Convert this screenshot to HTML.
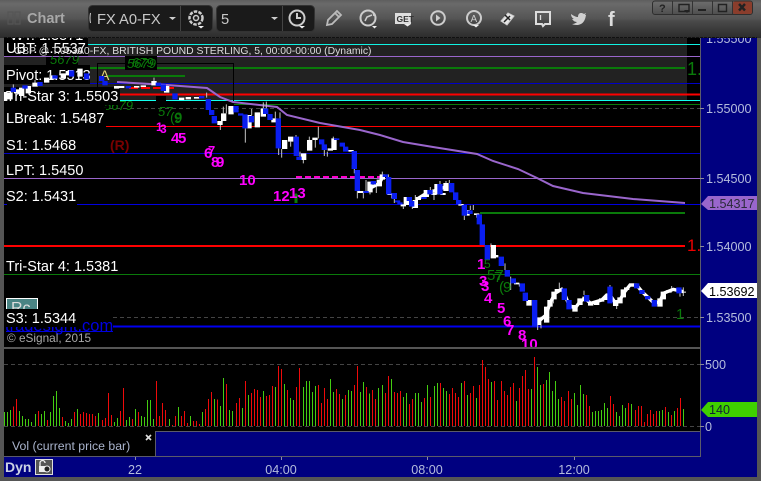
<!DOCTYPE html>
<html><head><meta charset="utf-8"><style>
html,body{margin:0;padding:0;background:#555;width:761px;height:481px;overflow:hidden}
svg{display:block;font-family:"Liberation Sans",sans-serif}
.l{font-size:14.5px;fill:#fff}
.ax{font-size:12.6px;fill:#b4bcdc}
.m{font-weight:bold;fill:#f0f}
.g{fill:#0a7a0a}
.w{stroke:#c4c4c4;stroke-width:3;fill:none}
.wb{stroke:#fff;stroke-width:16;fill:none}
.bb{stroke:#0a1ef0;stroke-width:16;fill:none}
.wl{stroke:#fff;stroke-width:10;fill:none}
.ic{fill:none;stroke:#ccc;stroke-width:2}
</style></head><body>
<svg width="761" height="481" viewBox="0 0 761 481" xmlns="http://www.w3.org/2000/svg">
<defs>
<linearGradient id="tb" x1="0" y1="0" x2="0" y2="1"><stop offset="0" stop-color="#5e5e5e"/><stop offset=".1" stop-color="#6a6a6a"/><stop offset=".5" stop-color="#545454"/><stop offset=".55" stop-color="#4a4a4a"/><stop offset="1" stop-color="#2b2b2b"/></linearGradient>
<linearGradient id="btn" x1="0" y1="0" x2="0" y2="1"><stop offset="0" stop-color="#6e6e6e"/><stop offset="1" stop-color="#4e4e4e"/></linearGradient>
<clipPath id="pane"><rect x="4" y="38" width="696" height="309"/></clipPath>
<clipPath id="axc"><rect x="701" y="38" width="56" height="400"/></clipPath>
<clipPath id="rc"><rect x="4" y="296" width="120" height="13"/></clipPath>
<clipPath id="nb"><rect x="4" y="309" width="200" height="40"/></clipPath>
</defs>
<rect width="761" height="481" fill="#555"/>
<rect width="761" height="38" fill="url(#tb)"/>
<path d="M4 37.500H757" stroke="#111" stroke-dasharray="3 1"/>
<rect x="701" y="38" width="56" height="439" fill="#000080"/>
<rect x="4" y="38" width="696" height="309" fill="#000"/>
<rect x="4" y="347" width="696" height="2" fill="#555"/>
<rect x="4" y="349" width="696" height="82" fill="#000"/>
<rect x="4" y="431" width="151" height="25" fill="#000"/>
<rect x="155" y="432" width="545" height="24" fill="#000080"/>
<rect x="4" y="457" width="753" height="20" fill="#000080"/>
<path d="M155.500 456V431.500H700M4 456.500H701M700.500 38V457" stroke="#5a5a6a" fill="none"/>

<g clip-path="url(#pane)">
<rect x="4" y="38" width="683" height="62" fill="#222"/>
<g shape-rendering="crispEdges" fill="none">
<path d="M4 44.500H700" stroke="#1fe" stroke-opacity=".95"/>
<path d="M4 56.500H700" stroke="#9a66cc"/>
<path d="M90 68H685" stroke="#0a7a0a" stroke-width="2"/>
<path d="M108 76H185" stroke="#0a7a0a" stroke-width="2"/>
<path d="M4 83.500H700" stroke="#0000c8"/>
<path d="M120 94.500H700" stroke="#f00" stroke-width="1.600"/>
<path d="M4 100.500H700" stroke="#1fe"/>
<path d="M4 104.500H700" stroke="#0a7a0a"/>
<path d="M4 108.500H700" stroke="#444" stroke-dasharray="4 3"/>
<path d="M106 126.500H700" stroke="#f00" stroke-width="1.400"/>
<path d="M4 153.500H700" stroke="#0000c8"/>
<path d="M4 178.500H700" stroke="#9a66cc"/>
<path d="M77 204.500H700" stroke="#0000e0" stroke-width="1.400"/>
<path d="M480 213H685" stroke="#0a7a0a" stroke-width="2"/>
<path d="M4 246H685" stroke="#f00" stroke-width="2"/>
<path d="M4 274.500H700" stroke="#0a7a0a"/>
<path d="M113 317.500H700" stroke="#444" stroke-dasharray="4 3"/>
<path d="M113 326.500H700" stroke="#0000f0" stroke-width="1.600"/>
<path d="M296 177H380" stroke="#f0c" stroke-width="2" stroke-dasharray="6 3"/>
<path d="M129 88H174" stroke="#f00" stroke-width="1.600" stroke-dasharray="9 3"/>
</g>
<rect x="97.500" y="63.500" width="136" height="41" fill="none" stroke="#000"/>
<polyline fill="none" stroke="#9a66cc" stroke-width="2" points="117,82 167,85 207,88 220,97 233,102 277,107 287,115 320,123 360,130 380,135 403,142 433,147 477,154 493,161 518,169 537,178 553,186 583,193 633,199 685,203"/>

<g transform="translate(200,95) scale(.3333)">
<path class="w" d="M61 90V105M70 35V55M79 28V55M136 100V143M155 42V60M190 22V40M199 20V40M226 50V70M240 52V70M236 160V180M245 162V188M272 140V155M288 120V128M300 170V185M310 195V205M328 125V135M346 135V158M355 95V130M373 165V183M382 170V185M400 125V130M463 222V235"/>
<path class="wb" d="M60 78V90M71 55V78M93 33V58M147 60V100M172 52V97M190 40V65M222 70V82M254 135V162M272 125V140M311 175V195M329 135V167M345 128V135M391 160V167M402 130V165M453 165V170"/>
<path class="bb" d="M25 12V45M35 45V60M43 63V85M108 33V52M122 55V62M135 58V100M154 63V82M197 40V57M210 57V75M235 70V160M289 125V183M297 185V195M365 133V148M373 148V165M410 130V135M427 143V155M437 155V170M463 168V222M472 225V240"/>
</g>
<g transform="translate(350,165) scale(.3333)">
<path class="w" d="M22 78V100M40 78V100M48 45V78M60 82V88M79 60V84M97 20V28M115 28V36M125 88V100M133 102V114M160 124V132M187 125V132M196 90V105M241 66V75M252 90V105M270 48V57M288 48V54M298 45V54M343 152V165M361 122V135M370 120V135M380 150V158M423 235V240"/>
<polyline class="wl" points="60,70 88,55 97,38"/>
<polyline class="wl" points="205,100 229,85 261,75 288,65"/>
<path class="wb" d="M31 78V84M60 50V82M88 44V64M97 28V44M120 85V90M160 118V124M169 96V120M196 105V129M205 96V105M229 75V96M252 84V90M261 57V88M279 84V90M288 54V78M333 117V122M351 135V152M380 145V150"/>
<path class="bb" d="M13 0V12M22 15V78M48 78V84M70 48V58M106 28V36M116 36V88M133 84V102M143 106V112M150 112V118M178 96V108M185 108V125M222 96V102M240 75V88M270 57V88M305 54V82M317 82V105M326 105V118M343 120V152M360 136V147M388 148V178M397 178V240"/>
</g>
<g transform="translate(470,240) scale(.3333)">
<path class="w" d="M105 70V90M122 110V150M148 130V140M203 255V270M213 230V265M268 128V147M250 175V190M342 152V165M420 135V140M440 198V207M605 138V145M640 142V168M630 160V170"/>
<polyline class="wl" points="205,245 228,225 240,190 255,160 275,148 283,160 297,195 315,205 330,185 345,175 362,190 395,180 410,165 420,165 437,190 450,180 462,158 480,135 500,135 516,155 553,190 570,185 580,160 610,148 640,155"/>
<path class="wb" d="M70 15V55M77 45V52M140 128V133M177 180V197M205 232V255M230 200V248M240 180V200M252 155V178M262 147V155M315 195V215M330 175V195M345 170V178M362 185V197M380 185V195M395 175V185M410 170V180M437 180V198M450 172V190M460 148V172M470 142V150M485 130V140M570 175V200M580 155V178M597 150V158M610 145V150M640 155V158"/>
<path class="bb" d="M37 0V15M52 15V60M94 50V78M112 90V110M130 115V130M157 130V155M166 158V183M194 180V260M283 145V180M297 180V208M350 165V185M420 140V190M500 130V145M516 150V162M533 168V178M553 180V200M627 142V160"/>
</g>

<!-- green study digits -->
<rect x="46" y="57" width="32" height="8" fill="#000"/>
<rect x="125" y="56" width="32" height="14" fill="#000"/>
<rect x="156" y="96" width="10" height="5" fill="#000"/>
<text x="50" y="64" class="g" font-size="13" font-style="italic">5679</text>
<text x="127" y="68" class="g" font-size="13" font-style="italic">5679</text>
<text x="132" y="67" class="g" font-size="13" font-style="italic">679</text>
<text x="104" y="110" class="g" font-size="13" font-style="italic">5679</text>
<text x="158" y="116" class="g" font-size="13" font-style="italic">57</text>
<text x="170" y="122" class="g" font-size="14">(9</text>
<text x="174" y="123" class="g" font-size="14">9</text>
<text x="484" y="268" class="g" font-size="12">5</text>
<text x="487" y="280" class="g" font-size="15">57</text>
<text x="494" y="282" class="g" font-size="15">7</text>
<text x="499" y="292" class="g" font-size="15">(</text>
<text x="503" y="292" class="g" font-size="15">9</text>
<text x="676" y="319" class="g" font-size="15">1</text>
<text x="687" y="75" font-size="18" fill="#0a7a0a">1.</text>
<text x="687" y="251" font-size="17" fill="#e00">1.</text>
<path d="M296 193l-4 4h2.500v6h3v-6h2.500z" fill="#0a7a0a"/>

<!-- magenta digits -->
<text x="156" y="131" class="m" font-size="12">1</text>
<text x="160" y="133" class="m" font-size="12">3</text>
<text x="171" y="143" class="m" font-size="15">4</text>
<text x="178" y="143" class="m" font-size="15">5</text>
<text x="204" y="158" class="m" font-size="15">6</text>
<text x="208" y="155" class="m" font-size="13">7</text>
<text x="211" y="167" class="m" font-size="15">8</text>
<text x="216" y="167" class="m" font-size="15">9</text>
<text x="239" y="185" class="m" font-size="15">10</text>
<text x="273" y="201" class="m" font-size="15">12</text>
<text x="289" y="198" class="m" font-size="15">13</text>
<text x="477" y="269" class="m" font-size="15">1</text>
<text x="479" y="286" class="m" font-size="15">3</text>
<text x="481" y="291" class="m" font-size="15">3</text>
<text x="484" y="303" class="m" font-size="15">4</text>
<text x="497" y="313" class="m" font-size="15">5</text>
<text x="503" y="326" class="m" font-size="15">6</text>
<text x="506" y="335" class="m" font-size="15">7</text>
<text x="518" y="340" class="m" font-size="15">8</text>
<text x="521" y="349" class="m" font-size="15">10</text>
<text x="110" y="150" font-size="14" font-weight="bold" fill="#7a0000">(R)</text>

<!-- header and labels -->
<rect x="4" y="38" width="84" height="18" fill="#000"/>
<text x="10" y="40" class="l">WT: 1.5571</text>
<text x="6" y="53" class="l">UBT: 1.5537</text>
<text x="14" y="54" font-size="10.400" fill="#ddd">GBP @ T.0530</text>
<text x="77" y="54" font-size="10.400" fill="#ddd">A0-FX, BRITISH POUND STERLING, 5, 00:00-00:00 (Dynamic)</text>
<rect x="4" y="65" width="86" height="19" fill="#000"/>
<text x="6" y="80" class="l">Pivot: 1.5513</text>
<text x="100" y="80" font-size="14" fill="#e8d878">A</text>
<rect x="4" y="87" width="116" height="18" fill="#000"/>
<text x="6" y="101" class="l">Tri-Star 3: 1.5503</text>
<rect x="4" y="108" width="102" height="19" fill="#000"/>
<text x="6" y="123" class="l">LBreak: 1.5487</text>
<!-- top-left candles drawn over labels -->
<g transform="translate(0,36) scale(.3333)">
<path class="w" d="M40 145V156M105 132V142M150 115V125M462 125V135M620 170V185"/>
<path class="wb" d="M14 168V195M30 170V190M50 160V172M65 155V180M85 150V172M105 140V152M140 125V140M160 118V130M190 112V128M205 105V118M240 98V122M350 150V158M365 150V156M410 150V155M430 148V153M462 135V148M500 150V170M545 185V192M565 183V190M590 183V188"/>
<path class="bb" d="M40 155V168M75 148V158M120 138V150M165 118V128M215 103V122M260 112V130M305 120V135M315 135V148M385 150V157M475 140V150M490 145V165M525 172V190M605 180V187"/>
</g>
<text x="6" y="150" class="l">S1: 1.5468</text>
<text x="6" y="175" class="l">LPT: 1.5450</text>
<rect x="4" y="188" width="73" height="19" fill="#000"/>
<text x="6" y="201" class="l">S2: 1.5431</text>
<path d="M4 204.500H7" stroke="#0000e0"/>
<text x="6" y="271" class="l">Tri-Star 4: 1.5381</text>
<g clip-path="url(#rc)"><rect x="6.500" y="298.500" width="31" height="20" fill="#4a8484" stroke="#fff"/><text x="11" y="313" font-size="16" fill="#ddd">Rc</text></g>
<g clip-path="url(#nb)"><text x="5" y="331" font-size="16.500" fill="#0000e0">tradesight.com</text></g>
<rect x="4" y="309" width="74" height="18" fill="#000"/>
<path d="M6 331.500H113" stroke="#0000e0"/>
<text x="6" y="323" class="l">S3: 1.5344</text>
<text x="7" y="342" font-size="11.800" fill="#a8a8a8">© eSignal, 2015</text>
</g>

<!-- volume -->
<path d="M4 364.500H700M4 426.500H700" stroke="#444" stroke-dasharray="4 3" shape-rendering="crispEdges"/>
<g transform="translate(0,350) scale(.3333)" fill="none" stroke-width="3" shape-rendering="crispEdges">
<path stroke="#44cc11" d="M13 228V186M22 228V186M31 228V180M58 228V183M67 228V198M76 228V207M85 228V207M94 228V216M106 228V192M124 228V192M133 228V183M151 228V186M160 228V138M169 228V123M178 228V174M196 228V213M205 228V219M214 228V207M232 228V177M295 228V189M343 228V216M352 228V204M379 228V210M388 228V201M406 228V177M424 228V198M433 228V201M442 228V150M451 228V150M460 228V207M508 228V207M535 228V171M571 228V198M607 228V186M643 228V147M661 228V168M670 228V84M688 228V180M697 228V183M727 228V174M745 228V135M790 228V123M826 228V111M853 228V102M871 228V144M880 228V150M910 228V111M919 228V93M928 228V93M937 228V126M946 228V108M991 228V87M1000 228V126M1027 228V147M1045 228V120M1054 228V123M1081 228V126M1090 228V96M1108 228V130M1135 228V114"/>
<path stroke="#ee0a0a" d="M40 228V170M49 228V147M115 228V183M142 228V210M187 228V201M223 228V186M241 228V192M250 228V186M259 228V189M268 228V192M277 228V192M286 228V198M307 228V210M316 228V204M325 228V129M334 228V195M361 228V183M370 228V114M397 228V207M415 228V186M469 228V93M478 228V198M487 228V159M496 228V180M517 228V225M526 228V198M544 228V198M553 228V183M562 228V219M580 228V213M589 228V213M598 228V222M616 228V177M625 228V147M634 228V126M652 228V148M679 228V102M709 228V159M718 228V144M736 228V93M754 228V129M763 228V117M772 228V120M781 228V141M799 228V138M808 228V135M817 228V108M835 228V48M844 228V57M862 228V120M889 228V111M898 228V54M955 228V105M964 228V159M973 228V114M982 228V147M1009 228V117M1018 228V132M1036 228V135M1063 228V105M1072 228V48M1099 228V111M1117 228V120M1126 228V147"/>
</g>
<g transform="translate(380,350) scale(.3333)" fill="none" stroke-width="3" shape-rendering="crispEdges">
<path stroke="#44cc11" d="M7 228V105M34 228V87M70 228V141M79 228V129M106 228V129M115 228V129M124 228V156M142 228V105M163 228V108M172 228V99M190 228V114M199 228V123M244 228V99M262 228V135M289 228V144M334 228V96M409 228V153M454 228V117M472 228V51M481 228V105M499 228V90M508 228V66M517 228V123M526 228V93M535 228V147M583 228V129M592 228V165M601 228V105M610 228V132M637 228V186M646 228V183M655 228V183M664 228V180M673 228V159M682 228V174M709 228V186M718 228V198M727 228V165M736 228V174M754 228V162M838 228V183M847 228V180M865 228V186M883 228V183M910 228V177"/>
<path stroke="#ee0a0a" d="M16 228V129M25 228V78M43 228V126M52 228V129M61 228V123M88 228V162M97 228V147M133 228V144M151 228V141M181 228V99M208 228V132M217 228V114M226 228V129M235 228V141M253 228V93M271 228V129M280 228V108M298 228V105M307 228V30M316 228V51M325 228V87M343 228V93M352 228V150M364 228V93M373 228V123M382 228V135M391 228V111M400 228V99M418 228V114M427 228V78M436 228V60M445 228V117M463 228V21M490 228V102M544 228V141M553 228V153M565 228V123M574 228V147M619 228V135M628 228V168M691 228V138M700 228V162M745 228V159M766 228V180M775 228V168M784 228V168M793 228V216M802 228V192M811 228V180M820 228V192M829 228V183M856 228V171M874 228V195M892 228V174M901 228V144"/>
</g>

<!-- axis -->
<path d="M700 108.500h4M700 178.500h4M700 246.500h4M700 317.500h4M700 364.500h4M700 426.500h4" stroke="#8a8a9a"/>
<g clip-path="url(#axc)">
<text x="706" y="43" class="ax">1.55500</text>
<text x="706" y="113" class="ax">1.55000</text>
<text x="706" y="183" class="ax">1.54500</text>
<text x="706" y="251" class="ax">1.54000</text>
<text x="706" y="322" class="ax">1.53500</text>
<text x="705" y="369" class="ax">500</text>
<text x="705" y="431" class="ax">0</text>
</g>
<path d="M701 204l7-8h49v14h-49z" fill="#9966cc"/>
<text x="709" y="208" font-size="12.600" fill="#2a2a3a">1.54317</text>
<path d="M701 291l7-8h49v15h-49z" fill="#fff"/>
<text x="709" y="296" font-size="12.600" fill="#000">1.53692</text>
<path d="M701 410l7-8h49v15h-49z" fill="#3fd000"/>
<text x="709" y="414" font-size="12.600" fill="#123">140</text>

<!-- bottom -->
<text x="12" y="450" font-size="12.300" fill="#aab4cc">Vol (current price bar)</text>
<path d="M146 435l5 5M151 435l-5 5" stroke="#ddd" stroke-width="1.600"/>
<path d="M135.500 457v3M281.500 457v3M427.500 457v3M574.500 457v3" stroke="#8a8aaa"/>
<text x="135" y="474" class="ax" text-anchor="middle">22</text>
<text x="281" y="474" class="ax" text-anchor="middle">04:00</text>
<text x="427" y="474" class="ax" text-anchor="middle">08:00</text>
<text x="574" y="474" class="ax" text-anchor="middle">12:00</text>
<text x="5" y="472" font-size="14" font-weight="bold" fill="#ccd2e4">Dyn</text>
<rect x="35.500" y="459.500" width="17" height="15" fill="#555" stroke="#ddd"/>
<path d="M40 468v-5a2.500 2.500 0 0 1 5 0" fill="none" stroke="#eee" stroke-width="1.300"/><rect x="39" y="466" width="6" height="6" fill="#eee"/><circle cx="47" cy="469" r="3" fill="#222" stroke="#eee"/>

<!-- toolbar -->
<rect x="8" y="12" width="5" height="12" fill="none" stroke="#555" stroke-width="1.200"/>
<rect x="15" y="12" width="5" height="12" fill="none" stroke="#555" stroke-width="1.200"/>
<text x="27" y="23" font-size="14.500" font-weight="bold" fill="#a8a8a8">Chart</text>
<rect x="88.500" y="5.500" width="124" height="26" rx="4" fill="#1a1a1a" stroke="#333"/>
<rect x="216.500" y="5.500" width="98" height="26" rx="4" fill="#1a1a1a" stroke="#333"/>
<path d="M180.500 6v25M282.500 6v25" stroke="#444"/>
<text x="97" y="24" font-size="14.700" fill="#c8c8c8">FX A0-FX</text>
<path d="M90.500 13q-1 5 0 10" stroke="#ccc" fill="none"/>
<text x="221" y="24" font-size="14.700" fill="#c8c8c8">5</text>
<path d="M169 17h7l-3.500 3zM271 17h7l-3.500 3z" fill="#ccc"/>
<circle cx="196" cy="18" r="6.500" fill="none" stroke="#ccc" stroke-width="2.500" stroke-dasharray="3.500 1.200"/><circle cx="196" cy="18" r="2.500" fill="none" stroke="#ccc" stroke-width="1.500"/>
<path d="M198 26h6l-3 2.500z" fill="#eee"/>
<circle cx="297" cy="18" r="7.500" class="ic"/><path d="M297 13v5h4" class="ic" stroke-width="1.500"/><path d="M299 26h6l-3 2.500z" fill="#eee"/>
<path d="M327 25l1-5 9-9 4 4-9 9zM335 13l4 4" fill="none" stroke="#bbb" stroke-width="1.800"/>
<circle cx="368" cy="18" r="7.500" class="ic"/><path d="M365 21l2-4 5-2M373 12l1 4" fill="none" stroke="#ccc" stroke-width="1.500"/><path d="M372 26h5l-2.500 2.500z" fill="#eee"/>
<path d="M395 13h16v11h-16z" fill="#ddd"/><text x="396.500" y="22" font-size="8.500" font-weight="bold" fill="#333">GET</text><path d="M404 24h7l-3.500 2.500z" fill="#eee"/>
<circle cx="438" cy="18" r="6.800" class="ic"/><path d="M436 14.500l4.500 3.500-4.500 3.500z" fill="#ccc"/>
<circle cx="474" cy="18" r="7" class="ic"/><text x="470.500" y="22" font-size="10" fill="#ccc">A</text><path d="M473 25h6l-3 2.500z" fill="#eee"/>
<path d="M501 21l7-8 6 3-7 9z" fill="#e6e6e6" stroke="#ccc"/><path d="M504 22l6-6M510 20l-5-5" stroke="#222" stroke-width="1.500"/>
<path d="M536 12h14v12h-5l-2 2-1-2h-6z" fill="none" stroke="#ddd" stroke-width="2"/><path d="M540.500 15v5" stroke="#ddd" stroke-width="1.300"/>
<path d="M571 14c3 2 5 3 7 3 0-4 3-5 6-3l2-1-1 2 1 0c-1 6-3 9-8 10-2 0-4 0-6-1 2 0 4-1 5-2-3 0-4-2-5-3h2c-2-1-3-3-3-5z" fill="#d0d0d0"/>
<text x="608" y="26" font-size="20" font-weight="bold" fill="#ddd">f</text>
<rect x="652.500" y="1" width="100" height="13.500" rx="2.500" fill="url(#btn)" stroke="#2e2e2e"/>
<rect x="733" y="1.500" width="19" height="12.500" rx="2" fill="#8a3d2c"/>
<path d="M672.500 1v13M692.500 1v13M712.500 1v13M732.500 1v13" stroke="#333"/>
<text x="659" y="12" font-size="11" font-weight="bold" fill="#222">?</text>
<path d="M679 4.500h10v7h-10z" fill="none" stroke="#222" stroke-width="1.400"/><path d="M684 10h6l-3 3z" fill="#222"/>
<path d="M698 10h8" stroke="#222" stroke-width="2"/>
<path d="M718.500 4.500h8v7h-8z" fill="none" stroke="#222" stroke-width="1.400"/>
<path d="M739 4l6 6.500M745 4l-6 6.500" stroke="#222" stroke-width="2.400"/>
</svg>
</body></html>
